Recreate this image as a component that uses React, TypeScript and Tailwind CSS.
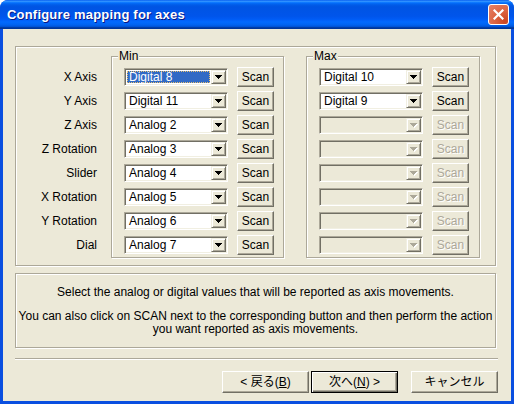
import type { ReactNode } from "react";

const labels = ["X Axis", "Y Axis", "Z Axis", "Z Rotation", "Slider", "X Rotation", "Y Rotation", "Dial"];
const minValues = ["Digital 8", "Digital 11", "Analog 2", "Analog 3", "Analog 4", "Analog 5", "Analog 6", "Analog 7"];
const maxValues = ["Digital 10", "Digital 9", "", "", "", "", "", ""];

function Arrow({ disabled }: { disabled?: boolean }) {
  const color = disabled ? "#aca899" : "#000";
  return (
    <svg width="8" height="5" viewBox="0 0 8 5" shapeRendering="crispEdges">
      {disabled && (
        <g fill="#fff">
          <rect x="1" y="1" width="7" height="1" />
          <rect x="2" y="2" width="5" height="1" />
          <rect x="3" y="3" width="3" height="1" />
          <rect x="4" y="4" width="1" height="1" />
        </g>
      )}
      <g fill={color}>
        <rect x="0" y="0" width="7" height="1" />
        <rect x="1" y="1" width="5" height="1" />
        <rect x="2" y="2" width="3" height="1" />
        <rect x="3" y="3" width="1" height="1" />
      </g>
    </svg>
  );
}

function Combo({ value, selected, disabled }: { value: string; selected?: boolean; disabled?: boolean }) {
  return (
    <div
      className={`flex h-[18px] w-[104px] border border-t-[#aca899] border-l-[#aca899] border-r-white border-b-white p-[1px] shadow-[inset_1px_1px_0_#716f64,inset_-1px_-1px_0_#f1efe2] ${
        disabled ? "bg-[#ece9d8]" : "bg-white"
      }`}
    >
      <div className="flex min-w-0 flex-1 p-[1px]">
        {selected ? (
          <span className="flex h-full w-full items-center border border-dotted border-[#e8c070] bg-[#316ac5] px-[1px] text-white">
            {value}
          </span>
        ) : (
          <span className="flex h-full items-center px-[2px]">{value}</span>
        )}
      </div>
      <div className="flex h-full w-[15px] items-center justify-center border border-t-[#f1efe2] border-l-[#f1efe2] border-r-[#716f64] border-b-[#716f64] bg-[#ece9d8] shadow-[inset_1px_1px_0_#fff,inset_-1px_-1px_0_#aca899]">
        <Arrow disabled={disabled} />
      </div>
    </div>
  );
}

function ScanButton({ disabled }: { disabled?: boolean }) {
  return (
    <button
      type="button"
      className={`h-[20px] w-[37px] border border-t-white border-l-white border-r-[#716f64] border-b-[#716f64] bg-[#ece9d8] leading-[13px] shadow-[inset_-1px_-1px_0_#aca899] ${
        disabled ? "text-[#aca899] [text-shadow:1px_1px_0_#fff]" : "text-black"
      }`}
    >
      Scan
    </button>
  );
}

function Group({ label, width, children }: { label: string; width: string; children: ReactNode }) {
  return (
    <div className={`relative border border-[#aca899] pb-[0px] pl-[12px] pt-[8px] shadow-[inset_1px_1px_0_#fff,1px_1px_0_#fff] ${width}`}>
      <span className="absolute left-[6px] top-[-7px] bg-[#ece9d8] px-[1px] leading-[13px]">{label}</span>
      {children}
    </div>
  );
}

function DialogButton({ children, isDefault }: { children: ReactNode; isDefault?: boolean }) {
  return (
    <button
      type="button"
      className={`h-[22px] w-[87px] bg-[#ece9d8] leading-[13px] ${
        isDefault
          ? "border border-black shadow-[inset_1px_1px_0_#fff,inset_-1px_-1px_0_#716f64,inset_-2px_-2px_0_#aca899]"
          : "border border-t-white border-l-white border-r-[#716f64] border-b-[#716f64] shadow-[inset_-1px_-1px_0_#aca899]"
      }`}
    >
      {children}
    </button>
  );
}

export default function App() {
  return (
    <div className="h-[404px] w-[514px] bg-white font-['Liberation_Sans','Noto_Sans_CJK_JP',sans-serif] text-[12px] leading-[13px] text-black">
      <div className="flex h-full flex-col overflow-hidden rounded-t-[8px] bg-[#0a4fe0]">
        {/* title bar */}
        <div className="flex h-[29px] items-center justify-between bg-[linear-gradient(to_bottom,#0058ee_0%,#3593ff_4%,#288eff_6%,#127dff_8%,#036ffc_10%,#0262ee_14%,#0057e5_20%,#0054e3_24%,#0055eb_56%,#005bf5_66%,#026afe_76%,#0062ef_86%,#0052d6_92%,#0040ab_94%,#003092_100%)] pl-[7px] pr-[5px]">
          <span className="text-[13px] font-bold tracking-[0.2px] text-white [text-shadow:1px_1px_0_#0a1883]">
            Configure mapping for axes
          </span>
          <button
            type="button"
            aria-label="Close"
            className="flex h-[21px] w-[21px] items-center justify-center rounded-[3px] border border-white bg-[radial-gradient(circle_at_85%_85%,#cc4622_0%,#dc6340_45%,#e5826a_100%)]"
          >
            <svg width="11" height="11" viewBox="0 0 11 11">
              <path d="M1.5 1.5l8 8M9.5 1.5l-8 8" stroke="#fff" strokeWidth="2.2" strokeLinecap="square" />
            </svg>
          </button>
        </div>

        {/* client area */}
        <div className="mx-[3px] mb-[3px] flex flex-1 flex-col bg-[#ece9d8] pl-[12px] pt-[17px]">
          <div className="flex h-[220px] w-[481px] items-start border border-[#aca899] pt-[9px] shadow-[inset_1px_1px_0_#fff,1px_1px_0_#fff]">
            <div className="mr-[14px] mt-[9px] flex w-[81px] flex-col items-end">
              {labels.map((l) => (
                <div key={l} className="flex h-[24px] items-center">
                  {l}
                </div>
              ))}
            </div>

            <Group label="Min" width="w-[173px]">
              {minValues.map((v, i) => (
                <div key={i} className="flex h-[24px] items-center gap-[9px]">
                  <Combo value={v} selected={i === 0} />
                  <ScanButton />
                </div>
              ))}
            </Group>

            <div className="w-[22px]" />

            <Group label="Max" width="w-[174px]">
              {maxValues.map((v, i) => (
                <div key={i} className="flex h-[24px] items-center gap-[9px]">
                  <Combo value={v} disabled={v === ""} />
                  <ScanButton disabled={v === ""} />
                </div>
              ))}
            </Group>
          </div>

          <div className="mt-[7px] flex h-[75px] w-[481px] flex-col items-center border border-[#aca899] pt-[12px] text-center shadow-[inset_1px_1px_0_#fff,1px_1px_0_#fff]">
            <p>Select the analog or digital values that will be reported as axis movements.</p>
            <p className="mt-[11px]">
              You can also click on SCAN next to the corresponding button and then perform the action
              <br />
              you want reported as axis movements.
            </p>
          </div>

          <div className="mt-[10px] h-[2px] w-[483px] border-t border-b border-t-[#aca899] border-b-white" />

          <div className="mt-[11px] flex pr-[13px] justify-end">
            <DialogButton>
              &lt; 戻る(<span className="underline">B</span>)
            </DialogButton>
            <div className="w-[2px]" />
            <DialogButton isDefault>
              次へ(<span className="underline">N</span>) &gt;
            </DialogButton>
            <div className="w-[13px]" />
            <DialogButton>キャンセル</DialogButton>
          </div>
        </div>
      </div>
    </div>
  );
}
